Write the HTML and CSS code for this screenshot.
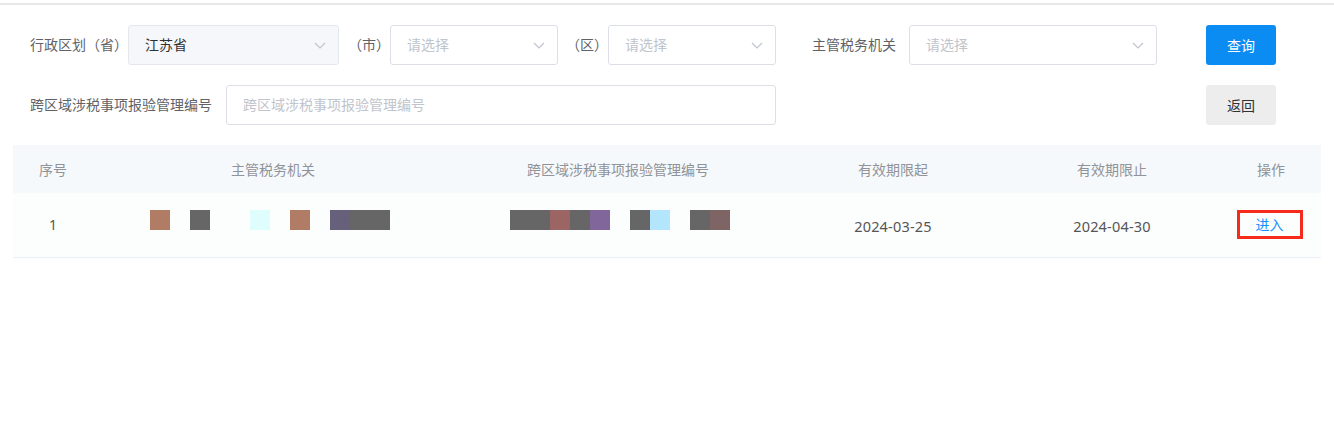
FILE: index.html
```html
<!DOCTYPE html>
<html lang="zh-CN">
<head>
<meta charset="utf-8">
<title>跨区域涉税事项报验</title>
<link rel="stylesheet" href="styles.css">
</head>
<body>
<div class="topline"></div>
<div class="filters">
  <div class="row">
    <span class="label">行政区划（省）</span>
    <div class="select disabled w-prov">
      <span class="value">江苏省</span>
      <svg class="chev" width="12" height="7" viewBox="0 0 12 7"><path d="M1 1 L6 6 L11 1" fill="none" stroke="#c0c4cc" stroke-width="1.2"/></svg>
    </div>
    <span class="label paren p-city">（市）</span>
    <div class="select w-city">
      <span class="ph">请选择</span>
      <svg class="chev" width="12" height="7" viewBox="0 0 12 7"><path d="M1 1 L6 6 L11 1" fill="none" stroke="#c0c4cc" stroke-width="1.2"/></svg>
    </div>
    <span class="label paren p-dist">（区）</span>
    <div class="select w-city">
      <span class="ph">请选择</span>
      <svg class="chev" width="12" height="7" viewBox="0 0 12 7"><path d="M1 1 L6 6 L11 1" fill="none" stroke="#c0c4cc" stroke-width="1.2"/></svg>
    </div>
    <span class="label org">主管税务机关</span>
    <div class="select w-org">
      <span class="ph">请选择</span>
      <svg class="chev" width="12" height="7" viewBox="0 0 12 7"><path d="M1 1 L6 6 L11 1" fill="none" stroke="#c0c4cc" stroke-width="1.2"/></svg>
    </div>
    <button class="btn primary">查询</button>
  </div>
  <div class="row">
    <span class="label">跨区域涉税事项报验管理编号</span>
    <div class="input"><span class="ph">跨区域涉税事项报验管理编号</span></div>
    <button class="btn default">返回</button>
  </div>
</div>
<table class="grid">
  <colgroup>
    <col class="c1"><col class="c2"><col class="c3"><col class="c4"><col class="c5"><col class="c6">
  </colgroup>
  <thead>
    <tr><th>序号</th><th>主管税务机关</th><th>跨区域涉税事项报验管理编号</th><th>有效期限起</th><th>有效期限止</th><th>操作</th></tr>
  </thead>
  <tbody>
    <tr>
      <td>1</td>
      <td>
        <div class="mask m-org">
          <span class="b k1"></span><span class="b"></span><span class="b k2"></span><span class="b"></span><span class="b"></span><span class="b k3"></span><span class="b"></span><span class="b k1"></span><span class="b"></span><span class="b k4"></span><span class="b k2"></span><span class="b k2"></span>
        </div>
      </td>
      <td>
        <div class="mask m-no">
          <span class="b k2"></span><span class="b k2"></span><span class="b k5"></span><span class="b k2"></span><span class="b k6"></span><span class="b"></span><span class="b k2"></span><span class="b k7"></span><span class="b"></span><span class="b k2"></span><span class="b k8"></span>
        </div>
      </td>
      <td class="date">2024-03-25</td>
      <td class="date">2024-04-30</td>
      <td><a class="enter">进入</a></td>
    </tr>
  </tbody>
</table>
</body>
</html>
```
FILE: styles.css
```css
* { box-sizing: border-box; }
html, body { margin: 0; padding: 0; background: #fff; }
body {
  font-family: "Noto Sans", "Noto Sans CJK SC", sans-serif;
  font-size: 14px;
  color: #606266;
}
.topline { margin-top: 3px; height: 2px; background: #e8e8e8; }

.filters {
  padding: 20px 58px 20px 30px;
  display: flex;
  flex-direction: column;
  gap: 20px;
}
.row { display: flex; align-items: center; height: 40px; }
.label { line-height: 40px; white-space: nowrap; color: #606266; flex: none; }
.label.paren { overflow: hidden; }
.p-city { width: 51px; padding-left: 9px; }
.p-dist { width: 50px; padding-left: 8px; }
.label.org { width: 133px; padding-left: 36px; }

.select, .input {
  height: 40px;
  border: 1px solid #dcdfe6;
  border-radius: 3px;
  background: #fff;
  display: flex;
  align-items: center;
  padding: 0 12px 0 16px;
  line-height: 38px;
  flex: none;
}
.select { justify-content: space-between; }
.select.disabled { background: #f5f7fa; border-color: #e4e7ed; }
.w-prov { width: 211px; }
.w-city { width: 168px; }
.w-org { width: 248px; }
.input { width: 550px; margin-left: 14px; }
.value { color: #303133; }
.ph { color: #c0c4cc; }
.chev { display: block; }

.btn {
  margin-left: auto;
  width: 70px;
  height: 40px;
  border: none;
  border-radius: 3px;
  font-family: inherit;
  font-size: 14px;
  padding: 0;
}
.btn.primary { background: #0a8cf2; color: #fff; }
.btn.default { background: #ededed; color: #303133; }

.grid {
  margin-left: 13px;
  width: 1308px;
  table-layout: fixed;
  border-collapse: collapse;
}
.c1 { width: 80px; }
.c2 { width: 360px; }
.c3 { width: 330px; }
.c4 { width: 220px; }
.c5 { width: 218px; }
.c6 { width: 100px; }
.grid th {
  height: 48px;
  background: #f6f9fb;
  font-weight: normal;
  color: #909399;
  text-align: center;
  padding: 0;
}
.grid td {
  height: 64px;
  background: #fcfdfd;
  border-bottom: 1px solid #ebeef5;
  text-align: center;
  color: #555;
  padding: 0;
}
.grid td.date { font-size: 14.5px; letter-spacing: 0.2px; padding-top: 2px; }
.mask { display: flex; justify-content: center; padding-bottom: 10px; }
.m-org { margin-left: -6px; }
.m-no { margin-left: 4px; }
.b { width: 20px; height: 20px; }
.k1 { background: #b07c66; }
.k2 { background: #666666; }
.k3 { background: #e0fdfd; }
.k4 { background: #67607a; }
.k5 { background: #9a6562; }
.k6 { background: #80669a; }
.k7 { background: #b3e5fc; }
.k8 { background: #7e6464; }

.enter {
  display: inline-block;
  width: 66px;
  height: 29px;
  line-height: 23px;
  border: 3px solid #f62b1c;
  color: #1890ff;
  margin-right: 3px;
}
```
